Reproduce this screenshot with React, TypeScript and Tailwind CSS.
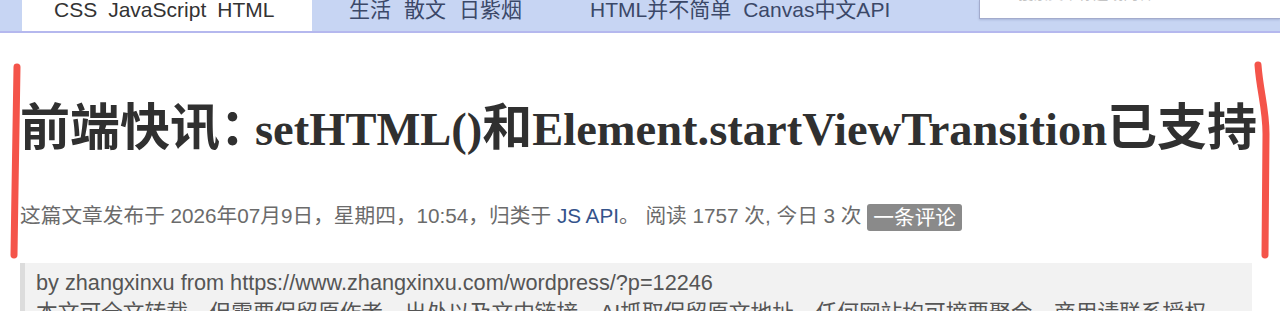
import React from "react";

const SANS = '"Liberation Sans", "Noto Sans CJK SC", sans-serif';
const SERIF = '"Liberation Serif", "Noto Sans CJK SC", serif';

export default function App() {
  return (
    <div className="relative w-[1280px] h-[311px] overflow-hidden bg-white" style={{ fontFamily: SANS }}>
      {/* top navigation */}
      <div className="h-[33px] bg-[#c7d5f3] border-b-2 border-[#b5b8ee] flex items-start text-[21px] leading-[20px] text-[#3b4868]">
        <div className="ml-[22px] w-[290px] h-[31px] bg-white flex gap-[11px] pl-[32px] text-[#333]">
          <span>CSS</span>
          <span>JavaScript</span>
          <span>HTML</span>
        </div>
        <div className="ml-[37px] w-[241px] flex gap-[13px]">
          <span>生活</span>
          <span>散文</span>
          <span>日紫烟</span>
        </div>
        <div className="w-[389px] flex gap-[12px]">
          <span>HTML并不简单</span>
          <span>Canvas中文API</span>
        </div>
        <div className="flex-1 h-[19px] bg-white border-l border-b border-[#a3abcc] shadow-[0_1px_2px_rgba(80,90,140,0.25)] overflow-hidden">
          <div className="ml-[26px] -mt-[15px] text-[15px] leading-[18px] text-[#c4c4c4]">
            ⌕ 搜索文章标题或内容...
          </div>
        </div>
      </div>

      {/* article header */}
      <div className="pl-[20px] pr-[28px]">
        <h1
          className="mt-[65px] h-[60px] text-[46.5px] leading-[60px] font-bold text-[#303030] whitespace-nowrap"
          style={{ fontFamily: SERIF }}
        >
          <span className="text-[50px]">前端快讯</span>
          <span className="text-[50px] mr-[-15px]">：</span>setHTML()<span className="text-[50px]">和</span>Element.startViewTransition<span className="text-[50px]">已支持</span>
        </h1>

        <div className="mt-[44px] text-[20.7px] leading-[28px] text-[#6b6b6b] whitespace-nowrap">
          这篇文章发布于 2026年07月9日，星期四，10:54，归类于 <span className="text-[#34538b]">JS API</span>。 阅读 1757 次, 今日 3 次{" "}
          <span className="inline-block h-[27px] leading-[27px] px-[6px] rounded-[3px] bg-[#8a8a8a] text-white align-middle">
            一条评论
          </span>
        </div>

        <div className="mt-[32px] bg-[#f2f2f2] border-l-[5px] border-[#dcdcdc] pl-[11px] pt-[5px] pb-[10px] text-[21.7px] leading-[30px] text-[#555]">
          <div className="whitespace-nowrap">by zhangxinxu from https://www.zhangxinxu.com/wordpress/?p=12246</div>
          <div className="whitespace-nowrap">
            本文可全文转载，但需要保留原作者、出处以及文中链接，AI抓取保留原文地址，任何网站均可摘要聚合，商用请联系授权。
          </div>
        </div>
      </div>

      {/* red hand-drawn annotation marks */}
      <svg className="absolute left-0 top-0 pointer-events-none" width="1280" height="311" viewBox="0 0 1280 311">
        <path d="M17 67 C16 120, 15 190, 14 255" stroke="#f4544a" strokeWidth="7" strokeLinecap="round" fill="none" />
        <path d="M1258 65 C1260 92, 1266 108, 1266 134 L1265 255" stroke="#f4544a" strokeWidth="7" strokeLinecap="round" fill="none" />
      </svg>
    </div>
  );
}
